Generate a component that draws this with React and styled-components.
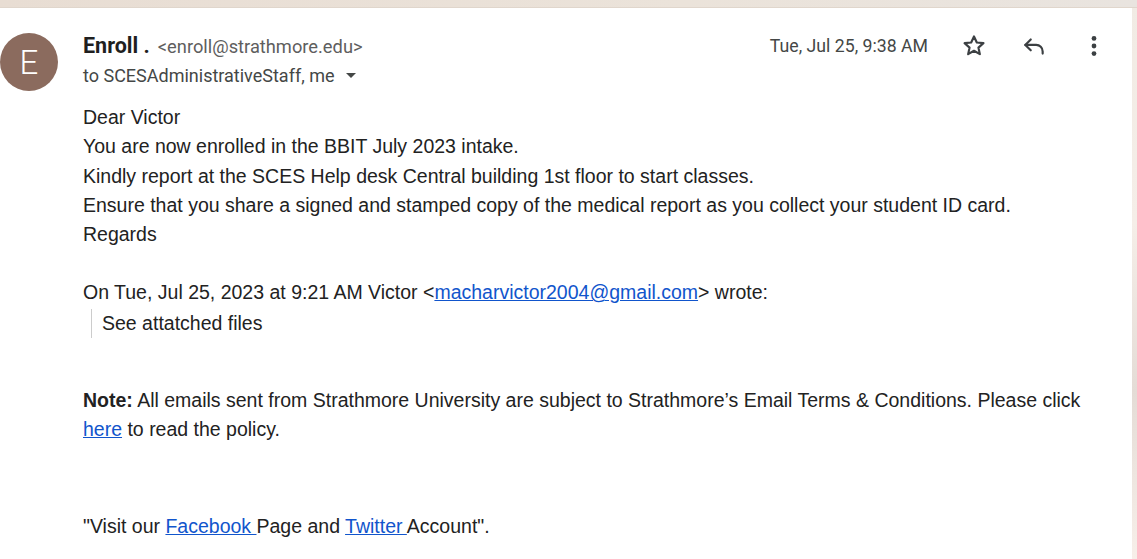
import React from "react";
import styled, { createGlobalStyle } from "styled-components";

const GlobalStyle = createGlobalStyle`
  html, body {
    margin: 0;
    padding: 0;
    background: #ffffff;
  }
  body {
    font-family: "Liberation Sans", Arial, sans-serif;
  }
`;

const Frame = styled.div`
  width: 1137px;
  height: 559px;
  overflow: hidden;
  display: flex;
  flex-direction: column;
  background: linear-gradient(180deg, #f1ebe4 0%, #f5eee8 40%, #e4dcd6 70%, #f7efe9 100%);
`;

const TopStrip = styled.div`
  height: 7px;
  flex: none;
  background: linear-gradient(90deg, #e8ddd3 0%, #ebe3da 60%, #e9e4df 100%);
  border-bottom: 1px solid #e0d6cc;
`;

const Panel = styled.div`
  flex: 1;
  margin-right: 5px;
  background: #ffffff;
  display: flex;
  flex-direction: column;
`;

const Header = styled.div`
  display: flex;
  align-items: flex-start;
  padding-top: 25px;
`;

const Avatar = styled.div`
  width: 58px;
  height: 58px;
  border-radius: 50%;
  background: #8b6b5e;
  color: #ffffff;
  display: flex;
  align-items: center;
  justify-content: center;
  font-family: Roboto, "Liberation Sans", sans-serif;
  font-size: 33px;
  font-weight: 300;
  flex: none;
`;

const Sender = styled.div`
  margin-left: 25px;
  flex: 1;
  font-family: Roboto, "Liberation Sans", sans-serif;
`;

const FromLine = styled.div`
  display: flex;
  align-items: baseline;
  gap: 8px;
  line-height: 26px;
`;

const Name = styled.span`
  font-size: 21.5px;
  font-weight: 700;
  color: #1f1f1f;
`;

const Address = styled.span`
  font-size: 18.3px;
  color: #5e5e5e;
`;

const ToLine = styled.div`
  margin-top: 5px;
  font-size: 18px;
  line-height: 21px;
  color: #444746;
  display: flex;
  align-items: center;
  gap: 8px;
`;

const Caret = styled.span`
  width: 0;
  height: 0;
  border-left: 5px solid transparent;
  border-right: 5px solid transparent;
  border-top: 5px solid #444746;
  margin-left: 3px;
`;

const Meta = styled.div`
  display: flex;
  align-items: center;
  height: 26px;
  padding-right: 8px;
  font-family: Roboto, "Liberation Sans", sans-serif;
`;

const Date = styled.span`
  font-size: 17.7px;
  color: #444746;
  margin-right: 16px;
`;

const IconButton = styled.span`
  width: 60px;
  height: 26px;
  display: flex;
  align-items: center;
  justify-content: center;
  color: #444746;
`;

const Body = styled.div`
  padding-left: 83px;
  margin-top: 12px;
  font-size: 19.5px;
  line-height: 29.3px;
  color: #222222;
`;

const Line = styled.div``;

const Gap = styled.div`
  height: ${(p) => p.h}px;
`;

const Link = styled.a`
  color: #1155cc;
  text-decoration: underline;
`;

const Quote = styled.div`
  margin: 1px 0 0 8px;
  padding-left: 10px;
  border-left: 1px solid #cccccc;
`;

const Strong = styled.b`
  font-weight: 700;
`;

function Star() {
  return (
    <svg width="26" height="26" viewBox="0 0 24 24" fill="none" stroke="#3c4043" strokeWidth="2" strokeLinejoin="round">
      <path d="M12 3.2l2.6 5.6 6.1.6-4.6 4.1 1.3 6-5.4-3.1-5.4 3.1 1.3-6-4.6-4.1 6.1-.6z" />
    </svg>
  );
}

function Reply() {
  return (
    <svg width="26" height="26" viewBox="0 0 24 24" fill="none" stroke="#3c4043" strokeWidth="2" strokeLinecap="round" strokeLinejoin="round">
      <path d="M9 6L4 11l5 5" />
      <path d="M4 11h10a6 6 0 0 1 6 6v2" />
    </svg>
  );
}

function More() {
  return (
    <svg width="26" height="26" viewBox="0 0 24 24" fill="#3c4043">
      <circle cx="12" cy="5" r="2.2" />
      <circle cx="12" cy="12" r="2.2" />
      <circle cx="12" cy="19" r="2.2" />
    </svg>
  );
}

export default function App() {
  return (
    <>
      <GlobalStyle />
      <Frame>
        <TopStrip />
        <Panel>
          <Header>
            <Avatar>E</Avatar>
            <Sender>
              <FromLine>
                <Name>Enroll .</Name>
                <Address>&lt;enroll@strathmore.edu&gt;</Address>
              </FromLine>
              <ToLine>
                to SCESAdministrativeStaff, me <Caret />
              </ToLine>
            </Sender>
            <Meta>
              <Date>Tue, Jul 25, 9:38 AM</Date>
              <IconButton><Star /></IconButton>
              <IconButton><Reply /></IconButton>
              <IconButton><More /></IconButton>
            </Meta>
          </Header>
          <Body>
            <Line>Dear Victor</Line>
            <Line>You are now enrolled in the BBIT July 2023 intake.</Line>
            <Line>Kindly report at the SCES Help desk Central building 1st floor to start classes.</Line>
            <Line>Ensure that you share a signed and stamped copy of the medical report as you collect your student ID card.</Line>
            <Line>Regards</Line>
            <Gap h={29} />
            <Line>
              On Tue, Jul 25, 2023 at 9:21 AM Victor &lt;<Link href="#">macharvictor2004@gmail.com</Link>&gt; wrote:
            </Line>
            <Quote>See attatched files</Quote>
            <Gap h={48} />
            <Line>
              <Strong>Note:</Strong> All emails sent from Strathmore University are subject to Strathmore’s Email Terms &amp; Conditions. Please click
            </Line>
            <Line>
              <Link href="#">here</Link> to read the policy.
            </Line>
            <Gap h={67} />
            <Line>
              "Visit our <Link href="#">Facebook </Link>Page and <Link href="#">Twitter </Link>Account".
            </Line>
          </Body>
        </Panel>
      </Frame>
    </>
  );
}
